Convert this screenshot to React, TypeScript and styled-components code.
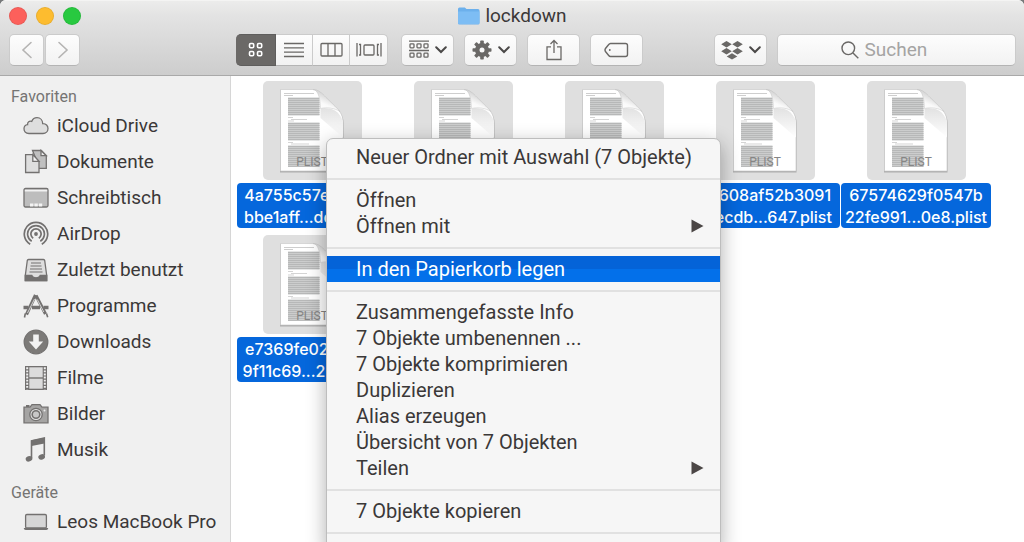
import React from "react";
import styled, { createGlobalStyle, css } from "styled-components";

const GlobalStyle = createGlobalStyle`
  * { box-sizing: border-box; }
  body { margin: 0; background: #77797a; overflow: hidden; }
  body, button, input { font-family: Roboto, "Liberation Sans", sans-serif; }
`;

const Window = styled.div`
  position: relative;
  display: flex;
  flex-direction: column;
  height: 100vh;
  overflow: hidden;
  background: #fff;
  border-radius: 6px 6px 0 0;
  color: #3b3838;
`;

const Header = styled.header`
  flex: none;
  height: 76px;
  padding: 1px 8px 0 9px;
  background: linear-gradient(#ececeb, #e3e3e3 20%, #cdcdcd);
  border-top: 1px solid #f4f4f3;
  border-bottom: 1px solid #a9a9a9;
`;

const TitleRow = styled.div`
  display: grid;
  grid-template-columns: 1fr auto 1fr;
  align-items: center;
  height: 27px;
`;

const Lights = styled.div`
  display: flex;
  gap: 9px;
`;

const Light = styled.button<{ $color: string }>`
  width: 18px;
  height: 18px;
  padding: 0;
  border: 1px solid rgba(0, 0, 0, 0.08);
  border-radius: 50%;
  background: ${(p) => p.$color};
`;

const Title = styled.h1`
  display: flex;
  align-items: center;
  gap: 5px;
  margin: 0;
  font-size: 19px;
  line-height: 24px;
  font-weight: 400;
`;

const Toolbar = styled.div`
  display: flex;
  align-items: center;
  gap: 10px;
  margin-top: 5px;
`;

const Group = styled.div<{ $gap?: number }>`
  display: flex;
  gap: ${(p) => p.$gap ?? 0}px;
`;

const surface = css`
  background: linear-gradient(#fdfdfd, #f2f2f2);
  border: 1px solid #cbcbcb;
  border-bottom-color: #b4b4b4;
`;

const ToolButton = styled.button<{ $width: number }>`
  ${surface}
  display: flex;
  align-items: center;
  justify-content: center;
  gap: 6px;
  width: ${(p) => p.$width}px;
  height: 32px;
  padding: 0;
  border-radius: 5px;
  color: #6a6866;
`;

const Segment = styled(ToolButton)<{ $active?: boolean }>`
  border-radius: 0;
  border-left-width: 0;
  &:first-child { border-radius: 5px 0 0 5px; }
  &:last-child { border-radius: 0 5px 5px 0; }
  ${(p) =>
    p.$active &&
    css`
      background: #6b6967;
      border-color: #5f5e5d;
      color: #fff;
    `}
`;

const ViewGroup = styled(Group)`
  margin: 0 3px 0 146px;
`;

const Trailing = styled.div`
  display: flex;
  gap: 10px;
  margin-left: auto;
`;

const Search = styled.label`
  ${surface}
  display: flex;
  align-items: center;
  justify-content: center;
  gap: 6px;
  width: 239px;
  height: 32px;
  padding-right: 16px;
  border-radius: 5px;
  color: #6a6866;
`;

const SearchInput = styled.input`
  width: 72px;
  padding: 0;
  border: 0;
  outline: 0;
  background: none;
  font-size: 19px;
  line-height: 24px;
  &::placeholder { color: #a5a4a3; opacity: 1; }
`;

const Body = styled.div`
  display: flex;
  flex: 1;
  min-height: 0;
`;

const Sidebar = styled.nav`
  flex: none;
  width: 231px;
  padding-top: 9px;
  background: #f0f0f0;
  border-right: 1px solid #d6d6d6;
  overflow: hidden;
`;

const SectionTitle = styled.h2`
  margin: 0;
  padding-left: 11px;
  font-size: 16px;
  line-height: 23px;
  font-weight: 400;
  color: #757473;
`;

const Places = styled.ul`
  margin: 0 0 13px;
  padding: 0;
  list-style: none;
`;

const Place = styled.a`
  display: flex;
  align-items: center;
  gap: 8px;
  height: 36px;
  padding-left: 23px;
  font-size: 19px;
  line-height: 24px;
  color: inherit;
  text-decoration: none;
  svg { flex: none; }
`;

const Files = styled.main`
  flex: 1;
  display: grid;
  grid-template-columns: repeat(auto-fill, 150px);
  align-content: start;
  gap: 7px 1px;
  padding: 5px 5px 5px 6px;
  overflow: hidden;
`;

const File = styled.figure`
  display: flex;
  flex-direction: column;
  align-items: center;
  gap: 3px;
  margin: 0;
`;

const Thumb = styled.div`
  width: 99px;
  height: 99px;
  border-radius: 5px;
  background: #dfdfdf;
`;

const FileName = styled.figcaption`
  width: 100%;
  height: 45px;
  padding-top: 1px;
  border-radius: 4px;
  background: #0567dc;
  color: #fff;
  font-family: Inter, Roboto, sans-serif;
  font-size: 16px;
  line-height: 22px;
  font-weight: 500;
  text-align: center;
  white-space: nowrap;
  span { display: block; }
`;

const Menu = styled.div`
  position: absolute;
  top: 138px;
  left: 326px;
  bottom: -8px;
  width: 395px;
  padding: 5px 0;
  background: #f6f6f6;
  border: 1px solid #bdbdbd;
  border-radius: 7px;
  box-shadow: 0 6px 20px rgba(0, 0, 0, 0.32);
`;

const MenuItem = styled.button<{ $active?: boolean }>`
  display: flex;
  align-items: center;
  justify-content: space-between;
  width: 100%;
  height: 26px;
  padding: 0 16px 0 29px;
  border: 0;
  background: ${(p) => (p.$active ? "linear-gradient(#0463d8 50%, #0370ea 50%)" : "none")};
  color: ${(p) => (p.$active ? "#fff" : "#3b3838")};
  font-size: 20px;
  line-height: 26px;
  text-align: left;
`;

const Separator = styled.hr`
  height: 2px;
  margin: 8px 0 7px;
  border: 0;
  background: #e1e1e1;
`;

const Chevron = () => (
  <svg width="12" height="8" viewBox="0 0 12 8" fill="none" stroke="#4b4948" strokeWidth="2">
    <path d="M1.2 1.2 6 6l4.800-4.800" strokeLinecap="round" />
  </svg>
);

const Arrow = ({ back }: { back?: boolean }) => (
  <svg width="12" height="18" viewBox="0 0 12 18" fill="none" stroke="#b5b4b3" strokeWidth="1.600" strokeLinecap="round">
    <path d={back ? "M10 1.500 2 9l8 7.500" : "M2 1.500 10 9l-8 7.500"} />
  </svg>
);

const GridIcon = () => (
  <svg width="16" height="16" viewBox="0 0 16 16" fill="none" stroke="currentColor" strokeWidth="1.600">
    {[[1.500, 1.500], [9.500, 1.500], [1.500, 9.500], [9.500, 9.500]].map(([x, y]) => (
      <rect key={`${x}-${y}`} x={x} y={y} width="4.200" height="4.200" rx="1.200" />
    ))}
  </svg>
);

const ListIcon = () => (
  <svg width="20" height="16" viewBox="0 0 20 16" stroke="currentColor" strokeWidth="1.300">
    <path d="M0 1.500h20M0 5.800h20M0 10.200h20M0 14.500h20" />
  </svg>
);

const ColumnsIcon = () => (
  <svg width="23" height="16" viewBox="0 0 23 16" fill="none" stroke="currentColor" strokeWidth="1.300">
    <rect x="1" y="1.500" width="21" height="12.500" rx="1" />
    <path d="M8 1.500V14M15 1.500V14" />
  </svg>
);

const FlowIcon = () => (
  <svg width="26" height="16" viewBox="0 0 26 16" fill="none" stroke="currentColor" strokeWidth="1.300">
    <rect x="8" y="3" width="10" height="10" rx="1" />
    <path d="M1 1v13.500M25 1v13.500M3 2.500h1.500v10.500H3M23 2.500h-1.500v10.500H23" />
  </svg>
);

const ArrangeIcon = () => (
  <svg width="20" height="20" viewBox="0 0 20 20" fill="none" stroke="currentColor" strokeWidth="1.300">
    <path d="M0 1.200h20M0 10.500h20" />
    {[3.800, 13.200].map((y) =>
      [1, 8, 15].map((x) => <rect key={`${x}-${y}`} x={x} y={y} width="4" height="4" rx="0.800" />)
    )}
  </svg>
);

const GearIcon = () => (
  <svg width="20" height="20" viewBox="0 0 20 20">
    <g fill="currentColor">
      {[0, 45, 90, 135].map((a) => (
        <rect key={a} x="8.200" y="0.500" width="3.600" height="19" rx="0.800" transform={`rotate(${a} 10 10)`} />
      ))}
      <circle cx="10" cy="10" r="7" />
    </g>
    <circle cx="10" cy="10" r="2.500" fill="#f8f8f8" />
  </svg>
);

const ShareIcon = () => (
  <svg width="18" height="22" viewBox="0 0 18 22" fill="none" stroke="currentColor" strokeWidth="1.300">
    <path d="M6 7.800H2V20.500h14V7.800h-4M9 14V1.500M5.500 5 9 1.500 12.500 5" />
  </svg>
);

const TagIcon = () => (
  <svg width="25" height="16" viewBox="0 0 25 16" fill="none" stroke="currentColor" strokeWidth="1.400">
    <path d="M6.500 1.500h15q2 0 2 2v9q0 2-2 2h-15Q5.500 14.500 4.500 13.200L1.500 9.500q-1-1.500 0-3l3-3.700Q5.500 1.500 6.500 1.500Z" />
    <circle cx="5.800" cy="8" r="0.900" fill="currentColor" stroke="none" />
  </svg>
);

const DropboxIcon = () => (
  <svg width="22" height="19" viewBox="0 0 22 19" fill="currentColor">
    <path d="M5.500 0 10.800 3.200 5.500 6.400.2 3.200ZM16.500 0l5.300 3.200-5.300 3.200-5.300-3.200ZM5.500 7l5.300 3.200-5.300 3.200L.2 10.200ZM16.500 7l5.300 3.200-5.300 3.200-5.300-3.200ZM11 12.200l5.300 3.200L11 18.600l-5.300-3.200Z" />
  </svg>
);

const SearchIcon = () => (
  <svg width="18" height="18" viewBox="0 0 18 18" fill="none" stroke="currentColor" strokeWidth="1.400">
    <circle cx="7.300" cy="7.300" r="6.300" />
    <path d="m12 12 5.300 5.300" />
  </svg>
);

const FolderIcon = () => (
  <svg width="22" height="18" viewBox="0 0 22 18">
    <path d="M0 2Q0 .5 1.500.5h5.300L8.500 2H20q1.500 0 1.500 1.500V16q0 1.500-1.500 1.500H1.500Q0 17.500 0 16Z" fill="#6cb0ec" />
    <path d="M0 4.500h21.500V16q0 1-1.500 1H1.500Q0 17 0 16Z" fill="#7dbdf4" />
  </svg>
);

const PlaceIcon = ({ children }: { children: React.ReactNode }) => (
  <svg width="26" height="26" viewBox="0 0 26 26" fill="none" stroke="#737170" strokeWidth="1.300" aria-hidden="true">
    {children}
  </svg>
);

const dark = "#737170";

const favorites: { name: string; icon: React.ReactNode }[] = [
  {
    name: "iCloud Drive",
    icon: <path d="M6 20.500C2.500 20.500 1 18 1 15.800c0-2.300 1.500-4 3.600-4.200C4.200 9 6.500 7.600 8.700 8.500 9.700 6 11.700 4.700 14 4.700c3.300 0 5.600 2.500 5.700 5.900 3.300-.2 5.300 2.100 5.300 4.900 0 3-2.200 5-5 5Z" fill="#dedede" />,
  },
  {
    name: "Dokumente",
    icon: (
      <>
        <path d="M9.500 1.500h8.800l5 5.200v12.600H13V10Z" fill="#c0c0c0" />
        <path d="M18 1.500v5.200h5.300Z" fill="#eee" />
        <path d="M2.600 5.600h7.200l6.200 6.800v11.100H2.600Z" fill="#dedede" />
        <path d="M9.800 5.600v6.800H16Z" fill="#f4f4f4" />
      </>
    ),
  },
  {
    name: "Schreibtisch",
    icon: (
      <>
        <rect x="1" y="3.500" width="24" height="18.500" rx="1.500" fill="#bdbdbd" />
        <path d="M1.800 5.700h22.400" stroke="#f2f2f2" strokeWidth="1.800" />
        <path d="M7 20h12.500" stroke="#f4f4f4" strokeWidth="2.800" strokeDasharray="3.400 1" />
      </>
    ),
  },
  {
    name: "AirDrop",
    icon: (
      <g strokeWidth="1.700">
        <path d="M7.200 23.200a11.700 11.700 0 1 1 11.600 0M8.700 20.200a8.400 8.400 0 1 1 8.600 0M10.200 17.200a5.100 5.100 0 1 1 5.600 0" />
        <circle cx="13" cy="13" r="1.900" fill={dark} stroke="none" />
      </g>
    ),
  },
  {
    name: "Zuletzt benutzt",
    icon: (
      <>
        <path d="M5.500 2.500h15q1 0 1.200 1l2 15v5.200H2.300v-5.200l2-15q.2-1 1.200-1Z" fill="#dedede" />
        <path d="M2.300 18.500h6.500q1 2.300 4.200 2.300t4.200-2.300h6.500v5.200H2.300Z" fill={dark} />
        <path d="M8 6h10M7.500 9h11M7 12h12M6.500 15h13" strokeWidth="1.200" />
      </>
    ),
  },
  {
    name: "Programme",
    icon: (
      <>
        <path d="M12.500 2 3.500 21.500" strokeWidth="3.200" />
        <path d="M13 2.500 22.500 21" strokeWidth="3.200" />
        <path d="M11.500 6 4.500 20M14.300 6.500l6.500 12.500" stroke="#ddd" strokeWidth="0.900" />
        <path d="M.5 14.500h5M9 14.500h8M20.500 14.500h5" strokeWidth="3.600" />
        <path d="m2.300 20.500-.8 4M23.500 20.500l1.200 3.800" strokeWidth="1.600" />
      </>
    ),
  },
  {
    name: "Downloads",
    icon: (
      <>
        <circle cx="13" cy="13" r="11.800" fill="#7c7a78" />
        <path d="M10.200 5.500h5.600v7h4.400L13 20.500l-7.200-8h4.400Z" fill="#f2f2f2" stroke="none" />
      </>
    ),
  },
  {
    name: "Filme",
    icon: (
      <>
        <rect x="2" y="1" width="22" height="24" fill={dark} stroke="none" />
        <rect x="6.300" y="2.300" width="13.400" height="10" fill="#dcdcdc" stroke="none" />
        <rect x="6.300" y="13.700" width="13.400" height="10" fill="#dcdcdc" stroke="none" />
        <path d="M4.200 2.300v22M21.800 2.300v22" stroke="#f0f0f0" strokeWidth="2" strokeDasharray="1.900 1.200" />
      </>
    ),
  },
  {
    name: "Bilder",
    icon: (
      <>
        <path d="M1 6.200h6l2-2.500h8l2 2.500h6v15.600H1Z" fill="#a5a4a3" />
        <path d="M3 5h3.500" strokeWidth="2" />
        <circle cx="13" cy="13.500" r="6.200" fill="#e4e4e4" />
        <circle cx="13" cy="13.500" r="3.800" fill="#c8c8c8" strokeWidth="1.600" />
        <circle cx="21.500" cy="9.500" r="1" fill="#eee" stroke="none" />
      </>
    ),
  },
  {
    name: "Musik",
    icon: (
      <>
        <path d="M8.500 21V3.800L21.300 1v17.500" strokeWidth="1.600" />
        <path d="M8.500 3.300 21.500.7v5.800L8.500 9Z" fill={dark} stroke="none" />
        <ellipse cx="6.100" cy="21.800" rx="3.400" ry="2.700" transform="rotate(-20 6 22)" fill={dark} stroke="none" />
        <ellipse cx="18.700" cy="19.800" rx="3.400" ry="2.700" transform="rotate(-20 19 20)" fill={dark} stroke="none" />
      </>
    ),
  },
];

const devices = [
  {
    name: "Leos MacBook Pro",
    icon: (
      <>
        <rect x="2.600" y="5.500" width="20.800" height="13.500" rx="1.300" fill="#d6d6d6" />
        <path d="M.7 19h24.600q-.2 2-2 2H2.700q-1.800 0-2-2Z" fill={dark} stroke="none" />
      </>
    ),
  },
];

const files: { name?: [string, string] }[] = [
  { name: ["4a755c57e49b6d", "bbe1aff...dd3.plist"] },
  {},
  {},
  { name: ["5d608af52b3091", "13ecdb...647.plist"] },
  { name: ["67574629f0547b", "22fe991...0e8.plist"] },
  { name: ["e7369fe02b58d4", "9f11c69...2e8.plist"] },
  {},
];

const textLines = [
  ...Array.from({ length: 9 }, (_, i) => 17.500 + i * 2),
  ...Array.from({ length: 9 }, (_, i) => 42.500 + i * 2),
  ...Array.from({ length: 11 }, (_, i) => 65.500 + i * 2),
];

const Plist = ({ kind }: { kind?: string }) => (
  <svg width="99" height="99" viewBox="0 0 99 99">
    <defs>
      <linearGradient id="curl" x1="0.200" y1="1" x2="0.600" y2="0.300">
        <stop offset="0" stopColor="#fff" />
        <stop offset="0.500" stopColor="#fafafa" />
        <stop offset="1" stopColor="#d6d6d6" />
      </linearGradient>
      <linearGradient id="fold" x1="0" y1="0" x2="0" y2="1">
        <stop offset="0" stopColor="#e2e2e2" />
        <stop offset="1" stopColor="#fff" />
      </linearGradient>
    </defs>
    <path d="M17 9h33c6 1 10 5 14 9l10 10c4 4 6.500 8 6.500 14v49.500H17Z" fill="#000" opacity="0.220" />
    <path d="M17.500 8.500H50c6 .5 9 4 13 8l11 11c4 4 6 8 6 14v48.500H17.500Z" fill="#fff" stroke="#c4c4c4" strokeWidth="0.600" />
    <path d="M57.500 27.500c8-1 18-.5 22.500 13v16L57.500 37Z" fill="url(#fold)" />
    <path d="M21 12.500h30M21 14.500h9" stroke="#b9b9b9" strokeWidth="0.700" />
    <path d="M25 16.500h31.500v18h-31.500ZM25 41.500h31.500v18h-31.500ZM25 64.500h31.500v21h-31.500Z" fill="#cccdcd" />
    <path d={textLines.map((y) => `M25 ${y}h31.500`).join("")} stroke="#b4b6b6" strokeWidth="0.900" />
    <path d="M25 36.500h5M28 38.500h16M25 40h6M25 61.500h5M28 63h18" stroke="#c2c2c2" strokeWidth="0.700" />
    <path d="M50 8.500c4 .5 7 5 7.500 19 7-1.500 14-.5 19.500 3Q74 27 63 16.500C59 12 55 8.800 50 8.500Z" fill="url(#curl)" stroke="#c2c2c2" strokeWidth="0.500" />
    {kind && (
      <text x="49" y="85" textAnchor="middle" fontFamily="Roboto, sans-serif" fontSize="12" fill="#858585">{kind}</text>
    )}
  </svg>
);

type Entry = { label: string; submenu?: boolean; active?: boolean };

const menuGroups: Entry[][] = [
  [{ label: "Neuer Ordner mit Auswahl (7 Objekte)" }],
  [{ label: "Öffnen" }, { label: "Öffnen mit", submenu: true }],
  [{ label: "In den Papierkorb legen", active: true }],
  [
    { label: "Zusammengefasste Info" },
    { label: "7 Objekte umbenennen ..." },
    { label: "7 Objekte komprimieren" },
    { label: "Duplizieren" },
    { label: "Alias erzeugen" },
    { label: "Übersicht von 7 Objekten" },
    { label: "Teilen", submenu: true },
  ],
  [{ label: "7 Objekte kopieren" }],
];

const PlaceList = ({ items }: { items: { name: string; icon: React.ReactNode }[] }) => (
  <Places>
    {items.map((p) => (
      <li key={p.name}>
        <Place href="#">
          <PlaceIcon>{p.icon}</PlaceIcon>
          {p.name}
        </Place>
      </li>
    ))}
  </Places>
);

export default function App() {
  return (
    <>
      <GlobalStyle />
      <Window>
        <Header>
          <TitleRow>
            <Lights>
              <Light $color="#fc605b" aria-label="Schließen" />
              <Light $color="#fdbc2f" aria-label="Minimieren" />
              <Light $color="#28c940" aria-label="Zoomen" />
            </Lights>
            <Title>
              <FolderIcon />
              lockdown
            </Title>
          </TitleRow>
          <Toolbar>
            <Group $gap={1}>
              <ToolButton $width={35} aria-label="Zurück"><Arrow back /></ToolButton>
              <ToolButton $width={35} aria-label="Vorwärts"><Arrow /></ToolButton>
            </Group>
            <ViewGroup>
              <Segment $width={40} $active aria-label="Symbole"><GridIcon /></Segment>
              <Segment $width={37} aria-label="Liste"><ListIcon /></Segment>
              <Segment $width={37} aria-label="Spalten"><ColumnsIcon /></Segment>
              <Segment $width={38} aria-label="Cover Flow"><FlowIcon /></Segment>
            </ViewGroup>
            <ToolButton $width={53} aria-label="Ausrichten"><ArrangeIcon /><Chevron /></ToolButton>
            <ToolButton $width={53} aria-label="Aktionen"><GearIcon /><Chevron /></ToolButton>
            <ToolButton $width={53} aria-label="Teilen"><ShareIcon /></ToolButton>
            <ToolButton $width={53} aria-label="Tags"><TagIcon /></ToolButton>
            <Trailing>
              <ToolButton $width={53} aria-label="Dropbox"><DropboxIcon /><Chevron /></ToolButton>
              <Search>
                <SearchIcon />
                <SearchInput type="text" placeholder="Suchen" aria-label="Suchen" />
              </Search>
            </Trailing>
          </Toolbar>
        </Header>
        <Body>
          <Sidebar>
            <SectionTitle>Favoriten</SectionTitle>
            <PlaceList items={favorites} />
            <SectionTitle>Geräte</SectionTitle>
            <PlaceList items={devices} />
          </Sidebar>
          <Files>
            {files.map(({ name }, index) => (
              <File key={index}>
                <Thumb><Plist kind={name && "PLIST"} /></Thumb>
                <FileName>
                  {name?.map((line) => <span key={line}>{line}</span>)}
                </FileName>
              </File>
            ))}
          </Files>
        </Body>
        <Menu role="menu">
          {menuGroups.map((group) => (
            <React.Fragment key={group[0].label}>
              {group.map((item) => (
                <MenuItem key={item.label} role="menuitem" $active={item.active}>
                  {item.label}
                  {item.submenu && (
                    <svg width="13" height="14" viewBox="0 0 13 14" fill="#4b4645"><path d="M.5.500 12.500 7 .5 13.500Z" /></svg>
                  )}
                </MenuItem>
              ))}
              <Separator />
            </React.Fragment>
          ))}
        </Menu>
      </Window>
    </>
  );
}
